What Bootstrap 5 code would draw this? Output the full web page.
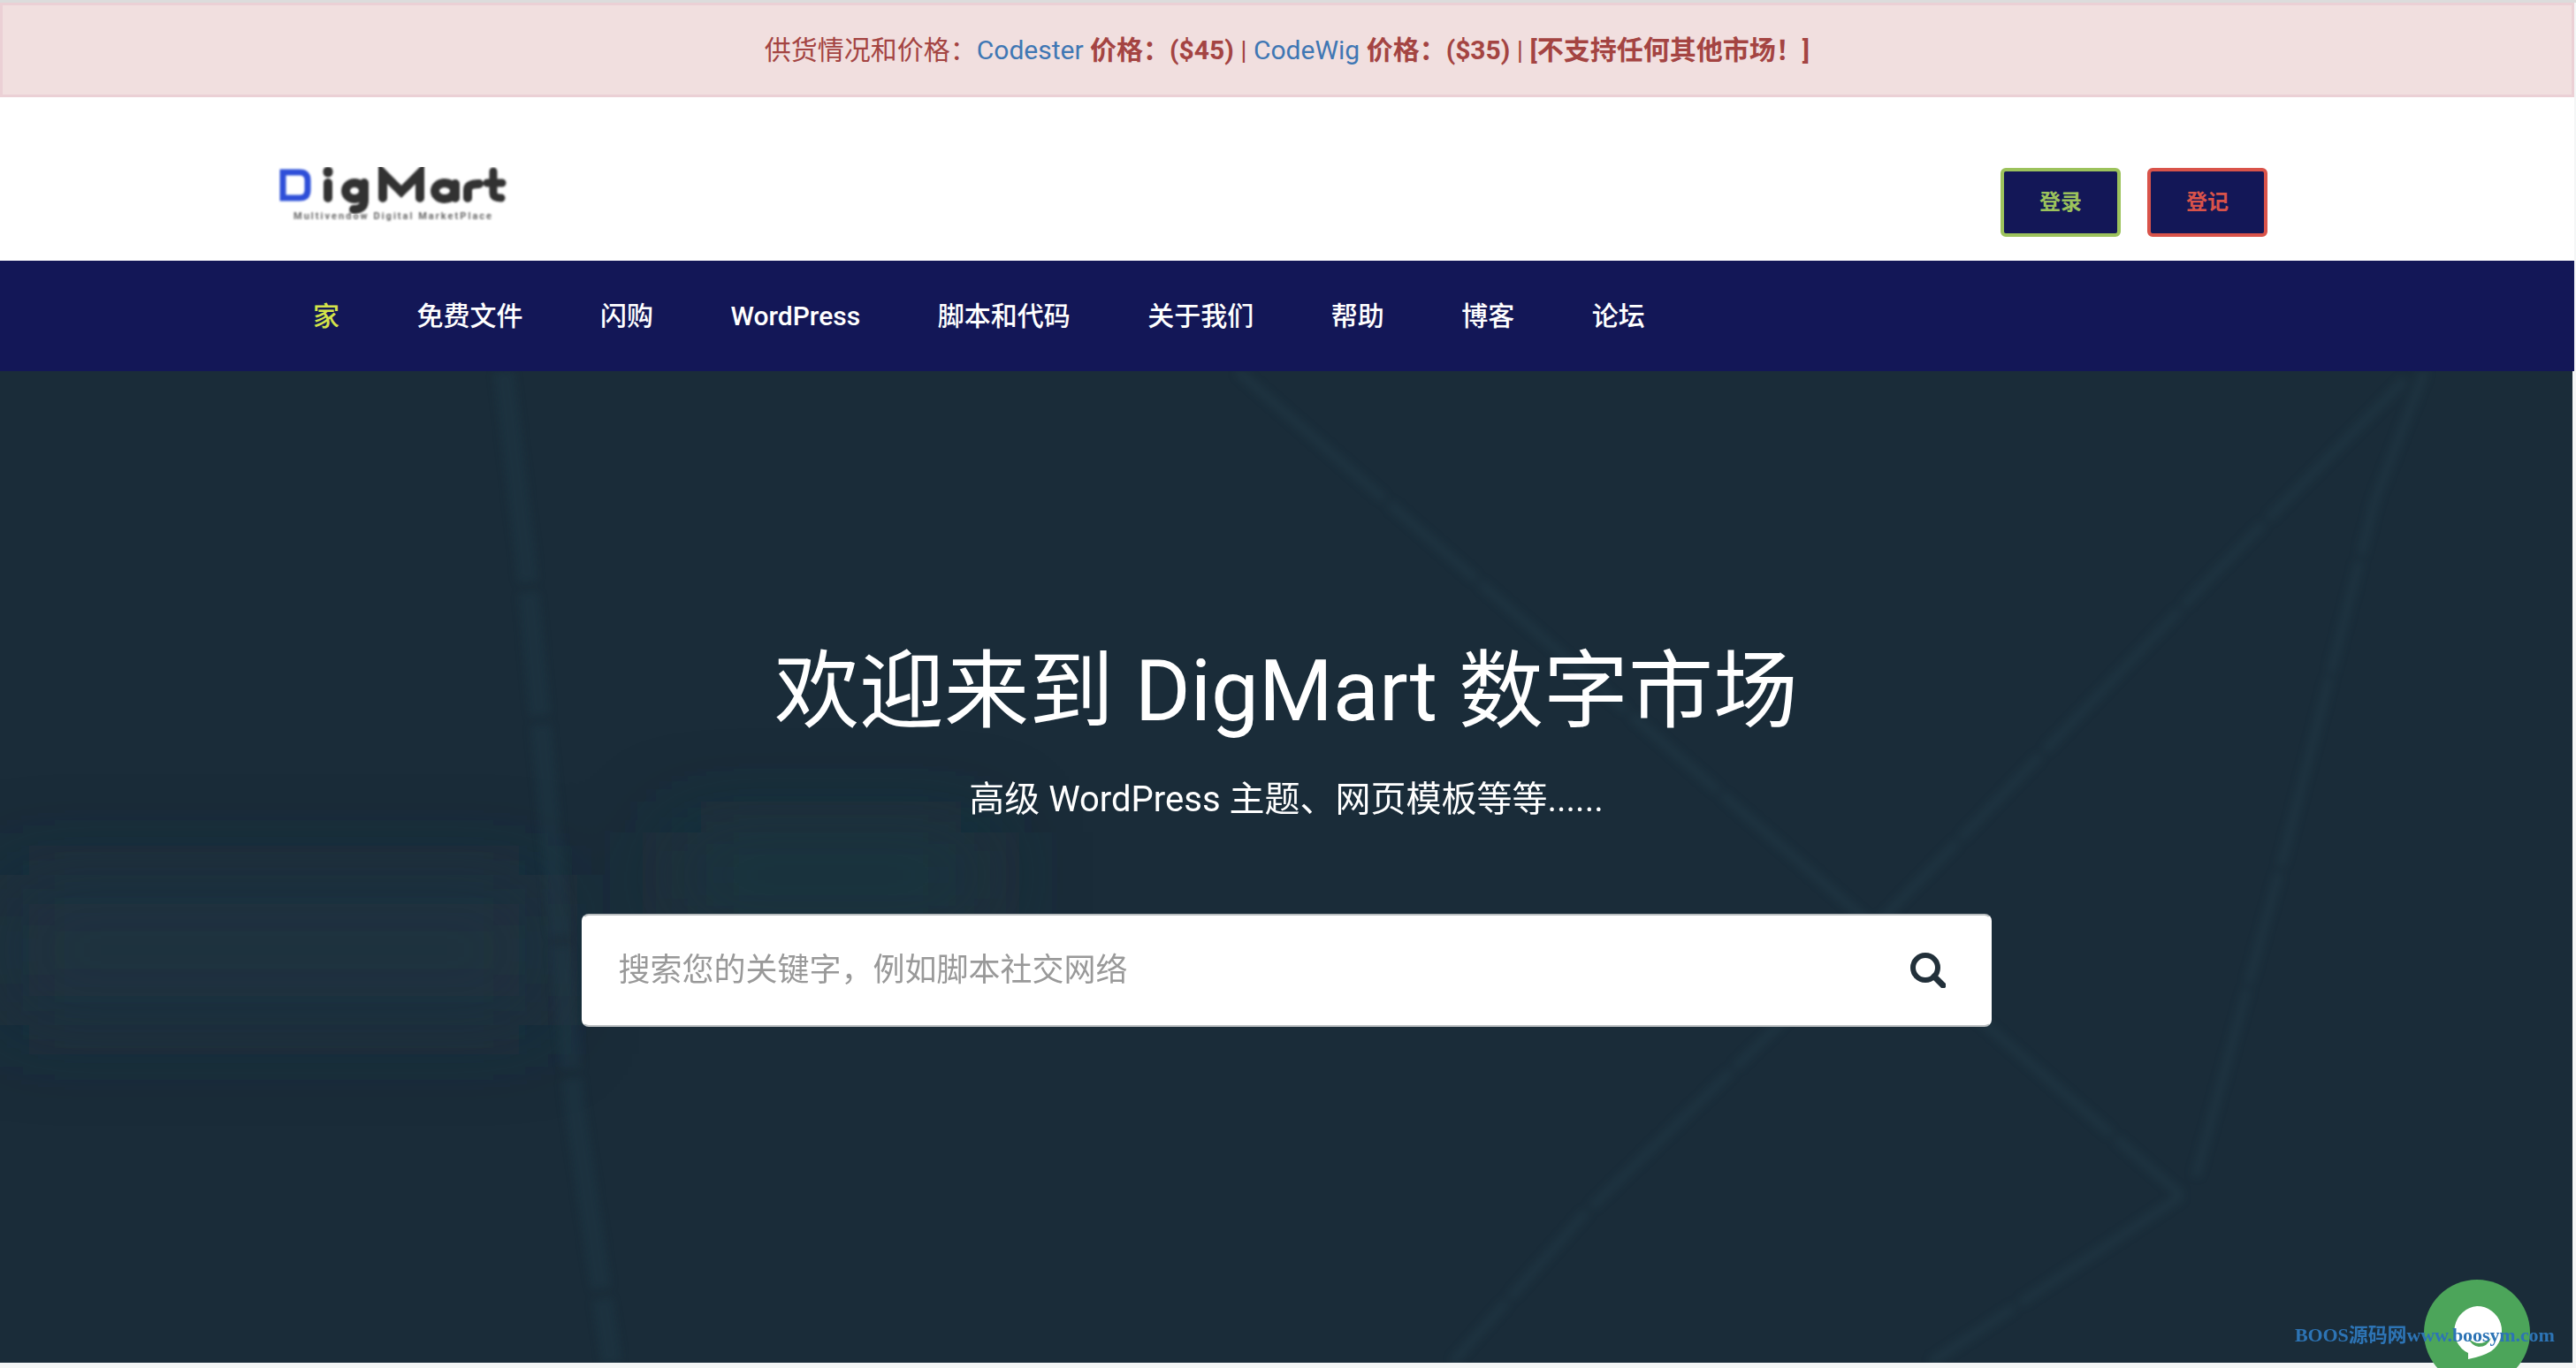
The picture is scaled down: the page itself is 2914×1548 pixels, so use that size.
<!DOCTYPE html>
<html lang="zh-CN">
<head>
  <meta charset="UTF-8">
  <meta name="viewport" content="width=device-width, initial-scale=1.0">
  <title>DigMart</title>
  <link href="https://cdn.jsdelivr.net/npm/bootstrap@5.3.0/dist/css/bootstrap.min.css" rel="stylesheet">
  <style>
    html, body { height: 100%; }
    body {
      background: #f4f6f6;
      font-family: Roboto, "Noto Sans CJK SC", sans-serif;
      overflow: hidden;
      padding-top: 3px;
      padding-right: 2px;
      box-shadow: inset 0 3px 0 #dcdcdc;
    }
    .top-notice {
      height: 107px;
      background: #f1dfdf;
      border: 3px solid #ebd0d5;
      color: #a44442;
      font-size: 30px;
    }
    .top-notice a { color: #3f77b4; text-decoration: none; }
    .top-notice b { font-weight: 700; }
    .page-wrap { width: 2210px; margin: 0 auto; }
    .brand-bar { height: 185px; background: #fff; padding-top: 77px; }
    .logo-box { line-height: 0; margin-left: -36px; margin-bottom: 13px; }
    .auth-group { gap: 30px; margin-right: -4px; }
    .auth-btn {
      width: 136px;
      height: 78px;
      background: #131757;
      border: 4px solid;
      border-radius: 6px;
      font-size: 24px;
      font-weight: 700;
      padding: 0;
    }
    .auth-login, .auth-login:hover { border-color: #9cc25c; color: #9cc25c; background: #131757; }
    .auth-reg, .auth-reg:hover { border-color: #d9534a; color: #d9534a; background: #131757; }
    .main-nav { height: 125px; background: #131757; }
    .main-nav .nav { margin-left: 3px; }
    .main-nav .nav-link {
      color: #fff;
      font-size: 30px;
      font-weight: 500;
      padding: 0;
      margin-right: 87.5px;
      line-height: 44px;
    }
    .main-nav .nav-link.active { color: #d4e34a; }
    .hero-area {
      height: 1122px;
      background: #1a2c39;
      position: relative;
      color: #fff;
      margin-right: 2px;
      overflow: hidden;
    }
    .hero-lines { position: absolute; inset: 0; width: 100%; height: 100%; }
    .hero-body { position: relative; padding-top: 305px; }
    .hero-title { font-size: 96px; font-weight: 400; line-height: 115px; margin-bottom: 41px; }
    .hero-sub { font-size: 40px; line-height: 48px; margin-bottom: 105px; }
    .search-box {
      width: 1595px;
      height: 128px;
      background: #fff;
      border: 2px solid #b8bdbf;
      border-left-color: #fff;
      border-right-color: #fff;
      border-radius: 8px;
      padding: 0 50px 0 38px;
    }
    .search-box input {
      border: 0;
      outline: 0;
      font-size: 36px;
      background: transparent;
      font-family: inherit;
    }
    .search-box input::placeholder { color: #999; opacity: 1; }
    .chat-bubble {
      position: fixed;
      left: 2742px;
      top: 1448px;
      width: 120px;
      height: 120px;
      background: #4ca55a;
      border-radius: 50%;
    }
    .site-mark {
      position: fixed;
      left: 2596px;
      top: 1498px;
      font-family: "Liberation Serif", "Noto Sans CJK SC", serif;
      font-weight: 700;
      font-size: 22px;
      line-height: 26px;
      letter-spacing: -0.1px;
      color: #2d74b5;
      white-space: nowrap;
    }
  </style>
</head>
<body>
  <div class="top-notice d-flex align-items-center justify-content-center">
    <span>供货情况和价格：<a href="#">Codester</a> <b>价格：($45)</b> | <a href="#">CodeWig</a> <b>价格：($35)</b> | <b>[不支持任何其他市场！]</b></span>
  </div>

  <div class="brand-bar">
    <div class="page-wrap d-flex align-items-center justify-content-between">
      <a class="logo-box" href="#">
        <svg width="264" height="70" viewBox="0 0 264 70">
          <defs><filter id="soft"><feGaussianBlur stdDeviation="1"/></filter></defs>
          <g filter="url(#soft)" fill="none" stroke-linecap="round">
            <path d="M5 8H24Q33 8 33 17V28Q33 37 24 37H5Z" stroke="#2f50d8" stroke-width="7"/>
            <g stroke="#333" stroke-width="10">
              <path d="M56 20V37"/>
              <path d="M56 7V8" stroke-width="11"/>
              <path d="M97 20V40Q97 50 85 50"/>
              <ellipse cx="86" cy="29" rx="10" ry="9"/>
              <path d="M118 37V9L139 30L160 9V37"/>
              <ellipse cx="188" cy="29" rx="11" ry="9"/>
              <path d="M200 21V37"/>
              <path d="M214 37V28Q214 21 227 21"/>
              <path d="M243 7V31Q243 37 252 37M236 20H253" stroke-width="9"/>
            </g>
          </g>
          <text x="17" y="61" font-family="Roboto, sans-serif" font-size="11" font-weight="700" fill="#666" textLength="224" filter="url(#soft)">Multivendow Digital MarketPlace</text>
        </svg>
      </a>
      <div class="d-flex auth-group">
        <button type="button" class="btn auth-btn auth-login">登录</button>
        <button type="button" class="btn auth-btn auth-reg">登记</button>
      </div>
    </div>
  </div>

  <nav class="main-nav d-flex align-items-center">
    <div class="page-wrap">
      <ul class="nav">
        <li class="nav-item"><a class="nav-link active" href="#">家</a></li>
        <li class="nav-item"><a class="nav-link" href="#">免费文件</a></li>
        <li class="nav-item"><a class="nav-link" href="#">闪购</a></li>
        <li class="nav-item"><a class="nav-link" href="#">WordPress</a></li>
        <li class="nav-item"><a class="nav-link" href="#">脚本和代码</a></li>
        <li class="nav-item"><a class="nav-link" href="#">关于我们</a></li>
        <li class="nav-item"><a class="nav-link" href="#">帮助</a></li>
        <li class="nav-item"><a class="nav-link" href="#">博客</a></li>
        <li class="nav-item"><a class="nav-link" href="#">论坛</a></li>
      </ul>
    </div>
  </nav>

  <section class="hero-area">
    <!-- faint background lines and glows of the hero photo -->
    <svg class="hero-lines" viewBox="0 0 2910 1122" preserveAspectRatio="none">
      <defs>
        <filter id="haze" x="-20%" y="-20%" width="140%" height="140%"><feGaussianBlur stdDeviation="5"/></filter>
        <filter id="glow" x="-30%" y="-100%" width="160%" height="300%"><feGaussianBlur stdDeviation="50"/></filter>
      </defs>
      <g filter="url(#glow)" fill="#1e3a45">
        <rect x="0" y="570" width="620" height="170" opacity=".5"/>
        <rect x="760" y="520" width="360" height="100" opacity=".6"/>
      </g>
      <g fill="none" stroke="#26434f" stroke-width="10" filter="url(#haze)" opacity=".34" stroke-dasharray="220 8 130 6">
        <path d="M1400 0L2468 933"/>
        <path d="M2720 10L2510 224L2212 535L2007 745L1792 954L1643 1122"/>
        <path d="M2743 0L2687 145L2585 542L2482 918"/>
        <path d="M2468 933L2184 1122"/>
      </g>
      <path d="M570 0L595 217L618 470L650 832L692 1122" fill="none" stroke="#24414e" stroke-width="24" filter="url(#haze)" opacity=".3" stroke-dasharray="240 12 140 10"/>
    </svg>
    <div class="hero-body text-center">
      <h1 class="hero-title">欢迎来到 DigMart 数字市场</h1>
      <p class="hero-sub">高级 WordPress 主题、网页模板等等......</p>
      <div class="search-box d-flex align-items-center mx-auto">
        <input class="flex-grow-1" type="text" placeholder="搜索您的关键字，例如脚本社交网络">
        <svg width="40" height="40" viewBox="0 0 40 40" fill="none" stroke="#22303a">
          <circle cx="17" cy="17" r="14" stroke-width="6"/>
          <path d="M27 27L37 37" stroke-width="7" stroke-linecap="round"/>
        </svg>
      </div>
    </div>
  </section>

  <div class="chat-bubble">
    <svg width="120" height="120" viewBox="0 0 120 120">
      <path d="M60 30A28 28 0 0 1 76 81Q66 87 50 90V83A28 28 0 0 1 60 30Z" fill="#fff"/>
      <path d="M50 66Q62 78 76 66Q72 76 62 76Q54 75 50 66Z" fill="#4ca55a"/>
    </svg>
  </div>
  <div class="site-mark">BOOS源码网www.boosym.com</div>

  <script src="https://cdn.jsdelivr.net/npm/bootstrap@5.3.0/dist/js/bootstrap.bundle.min.js"></script>
</body>
</html>
